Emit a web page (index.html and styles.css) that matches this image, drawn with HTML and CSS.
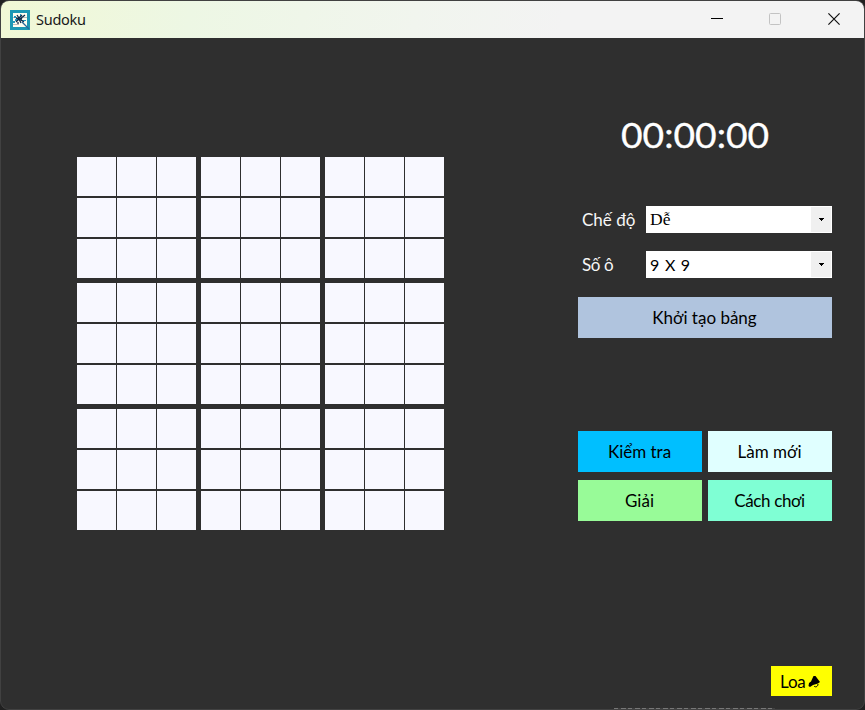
FILE: index.html
```
<!DOCTYPE html>
<html lang="vi">
<head>
<meta charset="utf-8">
<title>Sudoku</title>
<link rel="stylesheet" href="styles.css">
</head>
<body>
<div class="window">
  <header class="titlebar">
    <svg class="app-icon" width="20" height="20" viewBox="0 0 20 20">
      <path fill="#1c98b4" d="M0 0h20v20H0z"/><path fill="#fffef0" d="M3 3h14v14H3z"/>
      <path fill="#bbb" d="M3 7h4v1H3zM13 7h4v1h-4zM3 14h6v1H3z"/>
      <path fill="#2497bd" d="M4 6h2v2H4zM5 9h3v2H5zM3 11h2v2H3zM12 10h4v1h-4zM10 4h1v2h-1z"/>
      <path fill="none" stroke="#102b49" stroke-width="1.3" d="M7 5l2 3 3-3M6 8l4 1 5-4M6 12l3-3 2 4M12 7l-1 3 3 2M8 14v-2"/>
      <path stroke="#28679b" stroke-width="1.3" d="M12 12l7 7"/>
    </svg>
    <span class="title">Sudoku</span>
    <div class="controls">
      <svg width="12" height="12"><path d="M0 5.5h12" stroke="#000"/></svg>
      <svg class="maximize" width="12" height="12"><rect x=".5" y=".5" width="11" height="11" rx="1" fill="none" stroke="#c3c3c3"/></svg>
      <svg width="12" height="12"><path d="M.4 .4l11.2 11.2M11.6 .4L.4 11.6" stroke="#111" stroke-width="1.2"/></svg>
    </div>
  </header>
  <main class="content">
    <div class="board">
      <div class="block"><i></i><i></i><i></i><i></i><i></i><i></i><i></i><i></i><i></i></div>
      <div class="block"><i></i><i></i><i></i><i></i><i></i><i></i><i></i><i></i><i></i></div>
      <div class="block"><i></i><i></i><i></i><i></i><i></i><i></i><i></i><i></i><i></i></div>
      <div class="block"><i></i><i></i><i></i><i></i><i></i><i></i><i></i><i></i><i></i></div>
      <div class="block"><i></i><i></i><i></i><i></i><i></i><i></i><i></i><i></i><i></i></div>
      <div class="block"><i></i><i></i><i></i><i></i><i></i><i></i><i></i><i></i><i></i></div>
      <div class="block"><i></i><i></i><i></i><i></i><i></i><i></i><i></i><i></i><i></i></div>
      <div class="block"><i></i><i></i><i></i><i></i><i></i><i></i><i></i><i></i><i></i></div>
      <div class="block"><i></i><i></i><i></i><i></i><i></i><i></i><i></i><i></i><i></i></div>
    </div>
    <aside class="panel">
      <div class="timer">00:00:00</div>
      <div class="field"><span class="label">Chế độ</span><div class="select"><span class="level">Dễ</span><b class="drop"><svg width="5" height="3"><path d="M0 0h5v1H4v1H3v1H2V2H1V1H0z"/></svg></b></div></div>
      <div class="field"><span class="label cells">Số ô</span><div class="select"><span class="size">9 X 9</span><b class="drop"><svg width="5" height="3"><path d="M0 0h5v1H4v1H3v1H2V2H1V1H0z"/></svg></b></div></div>
      <button class="create">Khởi tạo bảng</button>
      <div class="actions">
        <button class="check">Kiểm tra</button>
        <button class="reset">Làm mới</button>
        <button class="solve">Giải</button>
        <button class="help">Cách chơi</button>
      </div>
      <button class="sound">Loa<svg width="13" height="13" viewBox="0 0 13 13"><path d="M5.500 1h2l4.500 6-2 1.500-5 1.500-3 2-1.500-1 .5-3 2-1.500z"/><path d="M6 11c1 1.500 4 1 4-2" fill="none" stroke="#000"/></svg></button>
    </aside>
  </main>
  <div class="edge"></div>
</div>
</body>
</html>
```
FILE: styles.css
```
* { box-sizing: border-box; }
body { margin: 0; width: 865px; height: 710px; overflow: hidden; background: #202020; font-family: Lato, "Open Sans", sans-serif; }
svg { display: block; }
.window { position: relative; width: 865px; height: 710px; border: 1px solid #414141; border-radius: 9px; overflow: hidden; background: #2f2f2f; }
.titlebar { height: 37px; display: flex; align-items: center; padding: 0 24px 0 9px; background: linear-gradient(100deg, #f1f8d5 0, #edf7e4 22%, #f1f5ee 48%, #f3f3f3 65%); }
.title { margin: -2px 0 0 6px; font: 14.5px "Noto Sans", sans-serif; letter-spacing: -.25px; color: #191919; }
.controls { margin: -1px 0 0 auto; display: flex; gap: 46px; }
.maximize { margin-right: 1px; }
.content { display: flex; align-items: flex-start; height: 671px; padding-left: 76px; }
.board { margin-top: 119px; display: grid; grid-template-columns: repeat(3, 119px); gap: 5px; }
.block { display: grid; grid-template-columns: repeat(3, 39px); grid-auto-rows: 39px; gap: 2px 1px; }
.block i { background: #f8f8ff; }
.panel { width: 254px; margin-left: 134px; display: flex; flex-direction: column; }
.timer { margin: 73px 0 0 43px; height: 50px; line-height: 47px; font-size: 34px; color: #fff; white-space: nowrap; transform: scaleX(1.095); transform-origin: left; -webkit-text-stroke: .3px #fff; }
.field { display: flex; height: 27px; margin-top: 18px; }
.timer + .field { margin-top: 45px; }
.label { width: 68px; padding-left: 4px; line-height: 27px; font-size: 17px; color: #f7f7f7; }
.cells { letter-spacing: -.4px; }
.select { width: 186px; display: flex; justify-content: space-between; background: #fff; padding: 1px; font-size: 17px; line-height: 25px; }
.select span { padding-left: 3px; }
.size { font-size: 16px; word-spacing: 1.5px; }
.level { font-family: "Liberation Serif", serif; font-size: 17.5px; }
.drop { width: 20px; background: #f0f0f0; display: flex; align-items: center; justify-content: center; }
button { border: 0; padding: 0; font: 17px Lato, sans-serif; color: #000; }
.create { height: 41px; margin-top: 19px; background: #b0c4de; }
.actions { margin-top: 93px; display: grid; grid-template-columns: 124px 124px; grid-auto-rows: 41px; gap: 8px 6px; }
.actions button, .create { padding-right: 1px; }
.check { background: #00bfff; }
.reset { background: #e0ffff; }
.solve { background: #98fb98; }
.help { background: #7fffd4; letter-spacing: -.35px; }
.sound { width: 61px; height: 30px; margin-top: 145px; align-self: flex-end; background: #ff0; display: flex; align-items: center; gap: 2px; padding-left: 9px; letter-spacing: -.2px; }
.edge { position: absolute; left: 613px; bottom: -1px; width: 161px; height: 2px; background: repeating-linear-gradient(90deg, #777 0 4px, #414141 4px 7px, #777 7px 12px, #414141 12px 14px); }
```
